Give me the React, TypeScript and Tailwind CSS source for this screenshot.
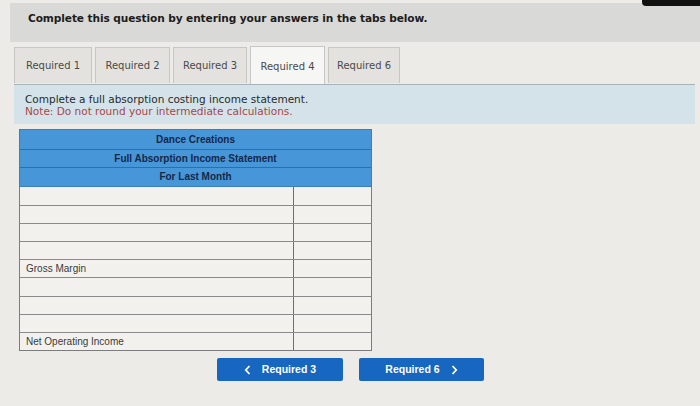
import React from "react";

const TABS = [
  { label: "Required 1", w: "w-[78px]", active: false },
  { label: "Required 2", w: "w-[75px]", active: false },
  { label: "Required 3", w: "w-[74px]", active: false },
  { label: "Required 4", w: "w-[75px]", active: true },
  { label: "Required 6", w: "w-[72px]", active: false },
];

const ROWS = ["", "", "", "", "Gross Margin", "", "", "", "Net Operating Income"];

function Chevron({ dir }: { dir: "left" | "right" }) {
  return (
    <svg width="7" height="10" viewBox="0 0 7 10" className="shrink-0">
      <path
        d={dir === "left" ? "M5.5 1 L1.8 5 L5.5 9" : "M1.5 1 L5.2 5 L1.5 9"}
        fill="none"
        stroke="white"
        strokeWidth="1.8"
      />
    </svg>
  );
}

export default function App() {
  return (
    <div className="relative h-[406px] w-[700px] overflow-hidden bg-[#ecebe8] font-['DejaVu_Sans',sans-serif]">
      {/* black strip at the top right of the photo */}
      <div className="absolute right-0 top-0 h-[6px] w-[58px] rounded-bl-sm bg-[#111]" />

      {/* question banner */}
      <div className="ml-[10px] mt-[3px] h-[39px] bg-[#d9d9d7] pl-[18px] pt-[8px]">
        <p className="text-[10.6px] font-bold tracking-[-0.1px] text-[#1c1c1c]">
          Complete this question by entering your answers in the tabs below.
        </p>
      </div>

      {/* tabs */}
      <div className="ml-[14px] mt-[4px] flex items-end gap-[3px]">
        {TABS.map((t) => (
          <div
            key={t.label}
            className={`${t.w} flex items-center justify-center border border-b-0 border-[#c6c6c4] text-[10px] text-[#4a4a4a] ${
              t.active
                ? "h-[38px] bg-[#f6f6f4] pt-[2px]"
                : "mb-[1px] h-[36px] bg-[#e3e2df]"
            }`}
          >
            {t.label}
          </div>
        ))}
      </div>

      {/* instructions */}
      <div className="ml-[14px] mr-[5px] h-[40px] border-t border-[#a9b4b8] bg-[#d3e3e9] pl-[11px] pt-[8px] text-[10.5px] leading-[12px]">
        <p className="text-[#2a2a2a]">
          Complete a full absorption costing income statement.
        </p>
        <p className="text-[#a8474a]">
          Note: Do not round your intermediate calculations.
        </p>
      </div>

      {/* statement table */}
      <div className="ml-[19px] mt-[5px] w-[353px] font-['Liberation_Sans',Arial,sans-serif]">
        <div className="border border-[#3b7fbf] bg-[#4796d8] text-[10px] font-bold text-[#14284a]">
          {["Dance Creations", "Full Absorption Income Statement", "For Last Month"].map(
            (h, i) => (
              <div
                key={h}
                className={`flex h-[18.5px] items-center justify-center ${
                  i > 0 ? "border-t border-[#2f6ea6]" : ""
                }`}
              >
                {h}
              </div>
            )
          )}
        </div>
        <div className="border-x border-b border-[#7c7c7c] bg-[#f2f1ee]">
          {ROWS.map((r, i) => (
            <div
              key={i}
              className={`flex h-[18.2px] ${i > 0 ? "border-t border-[#8a8a8a]" : ""}`}
            >
              <div className="flex flex-1 items-center pl-[6px] text-[10px] text-[#3a3a3a]">
                {r}
              </div>
              <div className="w-[78px] border-l border-[#6f6f6f]" />
            </div>
          ))}
        </div>
      </div>

      {/* navigation buttons */}
      <div className="ml-[217px] mt-[7px] flex gap-[16px] font-['Liberation_Sans',Arial,sans-serif] text-[10.5px] font-bold text-white">
        <div className="flex h-[23px] w-[126px] items-center justify-center gap-[11px] rounded-[2px] bg-[#1766c0]">
          <Chevron dir="left" />
          <span>Required 3</span>
        </div>
        <div className="flex h-[23px] w-[125px] items-center justify-center gap-[11px] rounded-[2px] bg-[#1766c0]">
          <span>Required 6</span>
          <Chevron dir="right" />
        </div>
      </div>
    </div>
  );
}
